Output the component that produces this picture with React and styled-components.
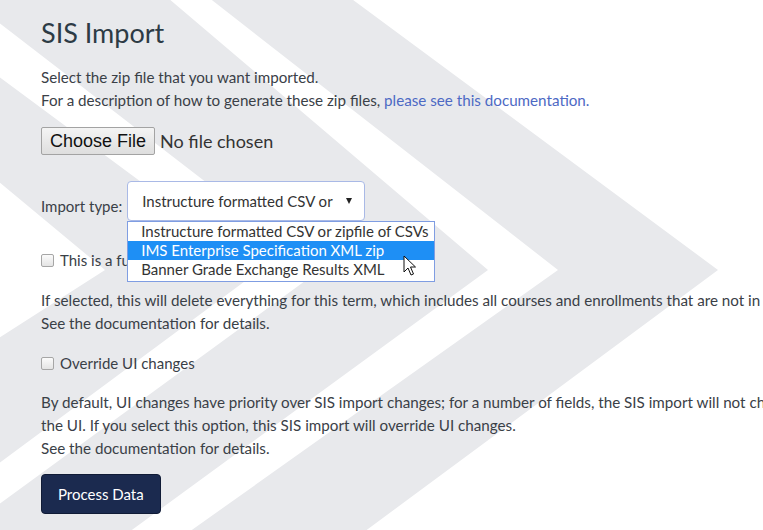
import React from 'react'
import styled, { createGlobalStyle } from 'styled-components'

const GlobalStyle = createGlobalStyle`
  html, body {
    margin: 0;
    padding: 0;
    background: #fff;
    overflow: hidden;
  }
  body {
    font-family: Lato, "Open Sans", sans-serif;
    color: #3a4047;
  }
`

// chevron edges of the backdrop: tip x, slope of the upper arm, slope of the lower arm
const TIP_Y = 270
const edges = {
  a: [105, 0.83, 0.64],
  b: [260, 0.74, 0.74],
  c: [320, 0.77, 0.73],
  d: [488, 0.85, 0.73],
  e: [558, 0.78, 0.71],
  f: [718, 0.74, 0.74],
}
const bands = [['a', 'b'], ['c', 'd'], ['e', 'f']]

function chevron(inner, outer) {
  const far = 700
  const [t1, u1, l1] = edges[inner]
  const [t2, u2, l2] = edges[outer]
  return [
    [t2, TIP_Y],
    [t2 - far, TIP_Y - far * u2],
    [t1 - far, TIP_Y - far * u1],
    [t1, TIP_Y],
    [t1 - far, TIP_Y + far * l1],
    [t2 - far, TIP_Y + far * l2],
  ].map(p => p.join(',')).join(' ')
}

function Backdrop() {
  return (
    <BackdropSvg viewBox="0 0 763 530" preserveAspectRatio="xMinYMin slice">
      {bands.map(([a, b]) => (
        <polygon key={a} points={chevron(a, b)} fill="#e8e9ec" />
      ))}
    </BackdropSvg>
  )
}

function Cursor() {
  return (
    <CursorSvg width="14" height="22" viewBox="0 0 14 22">
      <path d="M1 1 L1 17 L5 13 L8 20 L10.5 19 L7.5 12 L12.5 12 Z" fill="#fff" stroke="#111" strokeWidth="1" strokeLinejoin="round" />
    </CursorSvg>
  )
}

const options = [
  'Instructure formatted CSV or zipfile of CSVs',
  'IMS Enterprise Specification XML zip',
  'Banner Grade Exchange Results XML',
]

export default function App() {
  return (
    <Page>
      <GlobalStyle />
      <Backdrop />
      <Content>
        <Title>SIS Import</Title>
        <Text>
          Select the zip file that you want imported.<br />
          For a description of how to generate these zip files, <Link href="#">please see this documentation.</Link>
        </Text>

        <FileRow>
          <FileButton type="button">Choose File</FileButton>
          <FileName>No file chosen</FileName>
        </FileRow>

        <TypeRow>
          <Label>Import type:</Label>
          <SelectWrap>
            <SelectBox>
              <span>Instructure formatted CSV or</span>
              <Arrow />
            </SelectBox>
            <OptionList>
              {options.map((o, i) => (
                <Option key={o} $active={i === 1}>{o}</Option>
              ))}
              <Cursor />
            </OptionList>
          </SelectWrap>
        </TypeRow>

        <CheckRow $top={28}>
          <Box />
          <span>This is a full batch update</span>
        </CheckRow>

        <Text $top={17}>
          If selected, this will delete everything for this term, which includes all courses and enrollments that are not in this batch.<br />
          See the documentation for details.
        </Text>

        <CheckRow $top={17}>
          <Box />
          <span>Override UI changes</span>
        </CheckRow>

        <Text $top={16}>
          By default, UI changes have priority over SIS import changes; for a number of fields, the SIS import will not change that field's data if it has been changed in<br />
          the UI. If you select this option, this SIS import will override UI changes.<br />
          See the documentation for details.
        </Text>

        <SubmitButton type="button">Process Data</SubmitButton>
      </Content>
    </Page>
  )
}

const Page = styled.div`
  position: relative;
  width: 100vw;
  height: 100vh;
  overflow: hidden;
`

const BackdropSvg = styled.svg`
  position: absolute;
  inset: 0;
  width: 100%;
  height: 100%;
  z-index: 0;
`

const Content = styled.div`
  position: relative;
  z-index: 1;
  padding: 16px 0 0 41px;
  display: flex;
  flex-direction: column;
  align-items: flex-start;
`

const Title = styled.h1`
  margin: 0;
  font-size: 27px;
  font-weight: 400;
  line-height: 34px;
  color: #2d3b45;
`

const Text = styled.p`
  margin: ${p => p.$top ?? 16}px 0 0;
  font-size: 15.2px;
  line-height: 23px;
  white-space: nowrap;
  color: #3a4047;
`

const Link = styled.a`
  color: #4d69c4;
  text-decoration: none;
`

const FileRow = styled.div`
  margin-top: 15px;
  display: flex;
  align-items: center;
  gap: 5px;
`

const FileButton = styled.button`
  height: 28px;
  padding: 0 8px;
  font-family: "Liberation Sans", Arial, sans-serif;
  font-size: 18px;
  color: #111;
  background: linear-gradient(#f4f4f4, #dedede);
  border: 1px solid #a3a3a3;
  border-radius: 2px;
`

const FileName = styled.span`
  font-size: 18px;
  color: #333;
`

const TypeRow = styled.div`
  margin-top: 26px;
  display: flex;
  align-items: center;
  gap: 5px;
`

const Label = styled.span`
  font-size: 15px;
  padding-top: 10px;
  color: #3a4047;
`

const SelectWrap = styled.div`
  position: relative;
`

const SelectBox = styled.div`
  box-sizing: border-box;
  width: 238px;
  height: 40px;
  padding: 0 12px 0 14px;
  display: flex;
  align-items: center;
  justify-content: space-between;
  font-size: 15px;
  color: #333;
  background: #fff;
  border: 1px solid #a9b9e6;
  border-radius: 4px;
`

const Arrow = styled.span`
  width: 0;
  height: 0;
  border-left: 3.5px solid transparent;
  border-right: 3.5px solid transparent;
  border-top: 6px solid #222;
`

const OptionList = styled.div`
  position: absolute;
  top: 100%;
  left: 0;
  box-sizing: border-box;
  width: 308px;
  padding: 0 0 2px;
  background: #fff;
  border: 1px solid #7f9de2;
`

const Option = styled.div`
  height: 19px;
  line-height: 19px;
  padding-left: 13px;
  font-size: 15px;
  white-space: nowrap;
  color: ${p => (p.$active ? '#fff' : '#333')};
  background: ${p => (p.$active ? '#1e8ff5' : 'transparent')};
`

const CursorSvg = styled.svg`
  position: absolute;
  left: 275px;
  top: 33px;
`

const CheckRow = styled.label`
  margin-top: ${p => p.$top}px;
  display: flex;
  align-items: center;
  gap: 6px;
  font-size: 15px;
  line-height: 23px;
  color: #3a4047;
`

const Box = styled.span`
  box-sizing: border-box;
  width: 13px;
  height: 13px;
  border: 1px solid #a6a6a6;
  border-radius: 2px;
  background: linear-gradient(#fbfbfb, #e4e4e4);
`

const SubmitButton = styled.button`
  margin-top: 14px;
  height: 40px;
  padding: 0 16px;
  font-family: Lato, sans-serif;
  font-size: 15px;
  color: #fff;
  background: #1b2a4f;
  border: 1px solid #101b36;
  border-radius: 4px;
`
